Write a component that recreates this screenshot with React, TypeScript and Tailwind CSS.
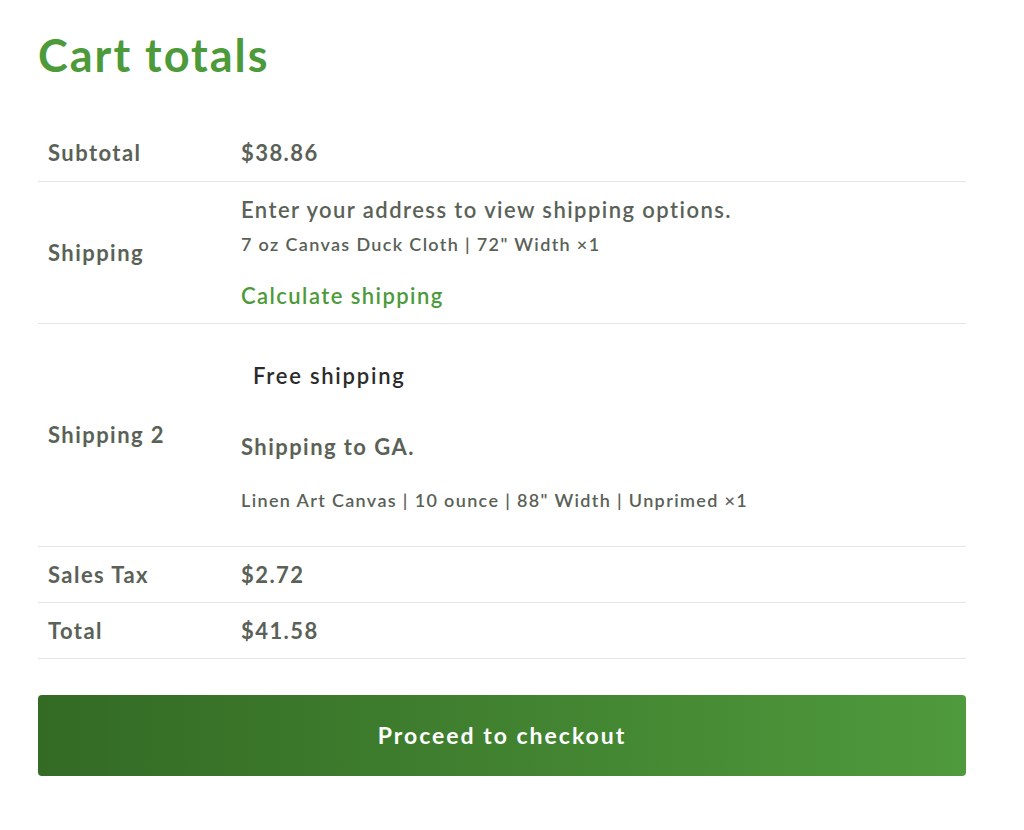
const rows = [
  { label: "Sales Tax", value: "$2.72" },
  { label: "Total", value: "$41.58" },
];

export default function App() {
  return (
    <div className="min-h-[830px] bg-white font-['Lato','Open_Sans',sans-serif] text-[#5a6157] tracking-[0.09em]">
      <div className="px-[38px] pt-[25px] w-[1004px]">
        <h2 className="text-[45px] font-bold leading-[60px] text-[#4d9a3a] tracking-[2px]">Cart totals</h2>

        <table className="mt-[40px] w-full border-collapse">
          <tbody>
            <tr className="border-b border-[#e6e6e6] h-[56px]">
              <th className="w-[203px] pl-[10px] text-left text-[22px] font-bold align-middle">Subtotal</th>
              <td className="text-[22px] font-bold">$38.86</td>
            </tr>

            <tr className="border-b border-[#e6e6e6] h-[142px]">
              <th className="pl-[10px] text-left text-[22px] font-bold align-middle">Shipping</th>
              <td className="align-top pt-[13px]">
                <p className="text-[22px] font-semibold leading-[30px]">Enter your address to view shipping options.</p>
                <p className="text-[18px] font-semibold leading-[24px] mt-[7px] tracking-[0.075em]">7 oz Canvas Duck Cloth | 72" Width ×1</p>
                <a className="block mt-[25px] text-[22px] font-semibold leading-[30px] text-[#4d9a3a]">Calculate shipping</a>
              </td>
            </tr>

            <tr className="border-b border-[#e6e6e6] h-[223px]">
              <th className="pl-[10px] text-left text-[22px] font-bold align-middle">Shipping 2</th>
              <td className="align-top pt-[37px]">
                <p className="pl-[12px] text-[22px] font-semibold leading-[30px] text-[#2b2b2b] tracking-[0.08em]">Free shipping</p>
                <p className="mt-[41px] text-[22px] font-bold leading-[30px]">Shipping to GA.</p>
                <p className="mt-[26px] text-[18px] font-semibold leading-[24px] tracking-[0.075em]">Linen Art Canvas | 10 ounce | 88" Width | Unprimed ×1</p>
              </td>
            </tr>

            {rows.map((r) => (
              <tr key={r.label} className="border-b border-[#e6e6e6] h-[56px]">
                <th className="pl-[10px] text-left text-[22px] font-bold align-middle">{r.label}</th>
                <td className="text-[22px] font-bold">{r.value}</td>
              </tr>
            ))}
          </tbody>
        </table>

        <button className="mt-[36px] w-full h-[81px] rounded-[4px] bg-gradient-to-r from-[#336a24] to-[#4f9a3c] text-white text-[23px] font-bold tracking-[2px]">
          Proceed to checkout
        </button>
      </div>
    </div>
  );
}
